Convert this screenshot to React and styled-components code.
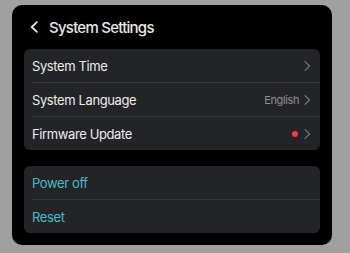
import React from "react";
import styled, { createGlobalStyle } from "styled-components";

const GlobalStyle = createGlobalStyle`
  body {
    margin: 0;
    background: #a0a0a0;
    font-family: Inter, "Noto Sans", sans-serif;
  }
`;

const Panel = styled.div`
  margin: 5px 0 0 12px;
  width: 320px;
  height: 240px;
  box-sizing: border-box;
  padding: 0 12px 11px;
  background: #000;
  border-radius: 10px;
  display: flex;
  flex-direction: column;
  gap: 16px;
`;

const Header = styled.div`
  flex-shrink: 0;
  height: 44px;
  margin-bottom: -16px;
  display: flex;
  align-items: center;
  gap: 11px;
  padding-left: 6px;
  color: #e6e6e6;
  font-size: 15px;
  font-weight: 500;
  letter-spacing: -0.05em;
`;

const Card = styled.div`
  flex-shrink: 0;
  background: #232427;
  border-radius: 6px;
`;

const Row = styled.div`
  height: 33px;
  display: flex;
  align-items: center;
  margin-left: 8px;
  padding-right: 9px;
  border-top: ${(p) => (p.$first ? "none" : "1px solid #3a3a3d")};
  color: ${(p) => (p.$accent ? "#46bccb" : "#ececec")};
  font-size: 13px;
  letter-spacing: -0.03em;
`;

const Label = styled.span`
  flex: 1;
`;

const Value = styled.span`
  color: #8e8e93;
  font-size: 11px;
  margin-right: 5px;
`;

const Dot = styled.span`
  width: 6px;
  height: 6px;
  border-radius: 50%;
  background: #ff3b30;
  margin-right: 6px;
`;

const Chevron = ({ left, color = "#77777c", w = 7, h = 10, sw = 1.2 }) => (
  <svg width={w} height={h} viewBox="0 0 7 10" fill="none">
    <path
      d={left ? "M6 0.8 L1.5 5 L6 9.2" : "M1 0.6 L5.6 5 L1 9.4"}
      stroke={color}
      strokeWidth={sw}
      strokeLinecap="round"
      strokeLinejoin="round"
    />
  </svg>
);

const items = [
  { label: "System Time" },
  { label: "System Language", value: "English" },
  { label: "Firmware Update", dot: true },
];

export default function App() {
  return (
    <>
      <GlobalStyle />
      <Panel>
        <Header>
          <Chevron left color="#e6e6e6" w={8} h={12} sw={1.6} />
          System Settings
        </Header>
        <Card>
          {items.map((it, i) => (
            <Row key={it.label} $first={i === 0}>
              <Label>{it.label}</Label>
              {it.value && <Value>{it.value}</Value>}
              {it.dot && <Dot />}
              <Chevron />
            </Row>
          ))}
        </Card>
        <Card>
          <Row $first $accent>
            <Label>Power off</Label>
          </Row>
          <Row $accent>
            <Label>Reset</Label>
          </Row>
        </Card>
      </Panel>
    </>
  );
}
